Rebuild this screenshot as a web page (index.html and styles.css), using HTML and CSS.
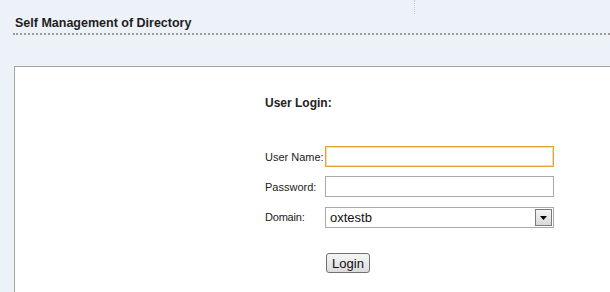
FILE: index.html
```html
<!DOCTYPE html>
<html>
<head>
<meta charset="utf-8">
<link rel="stylesheet" href="styles.css">
</head>
<body>
<div class="page">
  <div class="topmark"></div>
  <div class="header">
    <h1 class="title">Self Management of Directory</h1>
  </div>
  <div class="panel">
    <div class="login">
      <h2 class="login-title">User Login:</h2>
      <form class="form">
        <label class="label" for="u">User Name:</label>
        <input class="field field-focus" id="u" type="text">
        <label class="label" for="p">Password:</label>
        <input class="field" id="p" type="password">
        <label class="label label-domain" for="d">Domain:</label>
        <div class="select">
          <select id="d" class="select-native"><option>oxtestb</option></select>
          <span class="select-arrow"><svg width="7" height="4" viewBox="0 0 7 4"><path d="M0 0h7L3.5 4z" fill="#000"/></svg></span>
        </div>
        <span></span>
        <div class="actions"><button type="button" class="btn">Login</button></div>
      </form>
    </div>
  </div>
</div>
</body>
</html>
```
FILE: styles.css
```css
html, body {
  margin: 0;
  padding: 0;
  background: #edf1f8;
  font-family: "Liberation Sans", Arial, sans-serif;
  color: #222;
}
.page {
  position: relative;
  width: 610px;
  height: 292px;
  overflow: hidden;
}
.topmark {
  position: absolute;
  left: 414px;
  top: 0;
  height: 14px;
  border-left: 1px dotted #c4cbd6;
}
.header {
  margin-left: 13px;
  padding-top: 15px;
  border-bottom: 2px dotted #9a9a9a;
  height: 18px;
}
.title {
  margin: 0 0 0 2px;
  font-size: 12.5px;
  line-height: 16px;
  font-weight: bold;
  color: #1e1e1e;
}
.panel {
  margin-top: 31px;
  margin-left: 14px;
  background: #fff;
  border-top: 1px solid #a6a6a6;
  border-left: 1px solid #a6a6a6;
  height: 240px;
}
.login {
  padding-left: 250px;
  padding-top: 29px;
}
.login-title {
  margin: 0;
  font-size: 12px;
  line-height: 14px;
  font-weight: bold;
  color: #222;
}
.form {
  margin-top: 36px;
  display: grid;
  grid-template-columns: 60px 229px;
  row-gap: 9px;
  align-items: center;
}
.label {
  font-size: 11px;
  color: #222;
}
.label-domain {
  font-size: 11px;
  letter-spacing: -0.2px;
}
.field {
  box-sizing: border-box;
  width: 229px;
  height: 21px;
  margin: 0;
  border: 1px solid #a9a9a9;
  background: #fff;
  padding: 1px 3px;
  font-family: "Liberation Sans", Arial, sans-serif;
  font-size: 13px;
  outline: none;
}
.field-focus {
  border-color: #e2a53a;
  box-shadow: inset 0 0 0 1px #f6dba6;
}
.select {
  box-sizing: border-box;
  width: 229px;
  height: 21px;
  margin-top: 1px;
  display: flex;
  align-items: center;
  border: 1px solid #a9a9a9;
  background: #fff;
}
.select-native {
  flex: 1;
  height: 19px;
  border: 0;
  margin: 0;
  padding: 0 0 0 4px;
  background: transparent;
  appearance: none;
  -webkit-appearance: none;
  font-family: "Liberation Sans", Arial, sans-serif;
  font-size: 13px;
  color: #111;
  outline: none;
}
.select-arrow {
  box-sizing: border-box;
  width: 17px;
  height: 17px;
  margin-right: 1px;
  display: flex;
  align-items: center;
  justify-content: center;
  border: 1px solid #7a7a7a;
  background: linear-gradient(#f4f4f4, #d9d9d9);
}
.actions {
  margin-top: 16px;
  padding-left: 1px;
}
.btn {
  box-sizing: border-box;
  width: 44px;
  height: 20px;
  padding: 0;
  border: 1px solid #707070;
  border-radius: 3px;
  background: linear-gradient(#f6f6f6, #dcdcdc);
  font-family: "Liberation Sans", Arial, sans-serif;
  font-size: 13px;
  color: #111;
}
```
